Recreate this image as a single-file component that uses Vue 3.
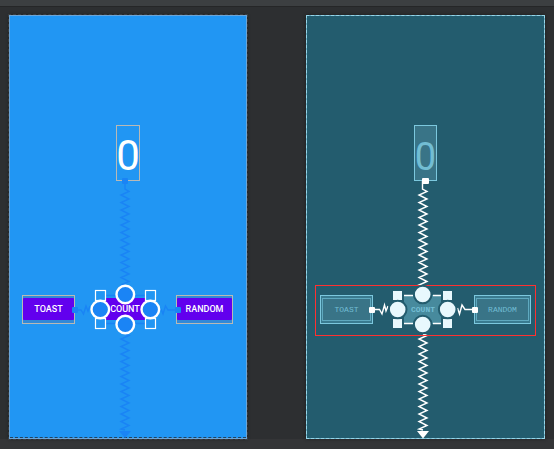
<script setup>
function spring(x, first, turns) {
  let d = ''
  for (let i = 0; i < turns; i++) {
    const y = first + i * 7.5
    d += ` L${x + 4} ${y} L${x - 4} ${y + 3.5}`
  }
  return d
}

const designTop = 'M116 166 V174' + spring(116, 176.5, 13)
const designBottom = 'M116 319' + spring(116, 320.5, 13) + ' L116 415'
const printTop = 'M116.5 166 V174' + spring(117, 176.5, 13) + ' L118 272'
const printBottom = 'M117 319' + spring(117, 320.5, 13) + ' L117 415'

const corners = [
  [0, 0],
  [50, 0],
  [0, 28],
  [50, 28],
]
const anchors = [
  [25, 0],
  [0, 15],
  [50, 15],
  [25, 30],
]
</script>

<template>
  <div class="editor">
    <header class="toolbar"></header>
    <main class="canvas">
      <section class="device design" aria-label="Design">
        <div class="stage">
          <span class="counter">0</span>
          <button class="widget toast" type="button"><span>TOAST</span></button>
          <button class="widget count" type="button"><span>COUNT</span></button>
          <button class="widget random" type="button"><span>RANDOM</span></button>
          <svg class="overlay" viewBox="0 0 239 424" aria-hidden="true">
            <g fill="none" stroke="#1a84f5" stroke-width="1.4">
              <path :d="designTop" />
              <path :d="designBottom" />
              <path d="M68 295 H72 L74.5 299 L77 291 L79 296 L81 291" />
              <path d="M168 295 H159 L156.5 291 L154 299 L152 294" />
              <path d="M97 280.5 H108 M124 280.5 H136 M97 308.5 H108 M124 308.5 H136" />
            </g>
            <g fill="#1a84f5">
              <rect x="113" y="163" width="6" height="6" rx="1" />
              <rect x="63" y="292" width="6" height="6" rx="1" />
              <rect x="166" y="292" width="6" height="6" rx="1" />
              <path d="M110 416 H122 L116 423 Z" />
            </g>
            <g fill="#2196f3" stroke="#ffffff" stroke-width="1.2">
              <rect
                v-for="(c, i) in corners"
                :key="i"
                :x="86.5 + c[0]"
                :y="275.5 + c[1]"
                width="10"
                height="10"
              />
            </g>
            <g fill="#1a84f5" stroke="#ffffff" stroke-width="2.4">
              <circle v-for="(a, i) in anchors" :key="i" :cx="91.3 + a[0]" :cy="279.5 + a[1]" r="8.8" />
            </g>
          </svg>
        </div>
      </section>

      <section class="device blueprint" aria-label="Blueprint">
        <div class="stage">
          <span class="counter">0</span>
          <button class="widget toast" type="button"><span>TOAST</span></button>
          <button class="widget count" type="button"><span>COUNT</span></button>
          <button class="widget random" type="button"><span>RANDOM</span></button>
          <svg class="overlay" viewBox="0 0 239 424" aria-hidden="true">
            <g fill="none" stroke="#ffffff" stroke-width="1.4">
              <path :d="printTop" />
              <path :d="printBottom" />
              <path d="M68 294.5 H73.5 L76 299 L78.5 290 L80 296 L82 291" />
              <path d="M168 294.5 H159 L156 290 L153.5 299 L151.5 293" />
              <path d="M97 280.5 H107 M127 280.5 H137 M97 308.5 H107 M127 308.5 H137" />
            </g>
            <g fill="#ffffff">
              <rect x="116" y="163" width="7" height="6" rx="1" />
              <rect x="63" y="292" width="6" height="6" rx="1" />
              <rect x="166" y="292" width="6" height="6" rx="1" />
              <path d="M111 416 H123 L117 423.5 Z" />
            </g>
            <rect x="9.5" y="270.5" width="220" height="50" fill="none" stroke="#ff3030" />
            <g fill="#e8f8fd" stroke="#235c6e" stroke-width="2">
              <rect
                v-for="(c, i) in corners"
                :key="i"
                :x="86 + c[0]"
                :y="275 + c[1]"
                width="11"
                height="11"
              />
              <circle v-for="(a, i) in anchors" :key="i" :cx="91.7 + a[0]" :cy="279.5 + a[1]" r="8.8" />
            </g>
          </svg>
        </div>
      </section>
    </main>
    <footer class="statusbar"></footer>
  </div>
</template>

<style>
body {
  margin: 0;
  background: #2d2f31;
}
</style>

<style scoped>
.editor {
  display: flex;
  flex-direction: column;
  min-height: 100vh;
  background: #2d2f31;
  font-family: Roboto, sans-serif;
}
.toolbar {
  height: 6px;
  background: #3c3f41;
  border-bottom: 1px solid #252627;
}
.canvas {
  flex: 1;
  display: flex;
  gap: 58px;
  padding: 8px 9px 0;
}
.statusbar {
  height: 10px;
  background: #343537;
}
.device {
  position: relative;
  flex: 1;
  display: flex;
  justify-content: center;
  box-shadow: 0 0 3px #1b1c1d;
}
.device::after {
  content: '';
  position: absolute;
  inset: 0;
  pointer-events: none;
}
.design {
  margin-right: 1px;
  background: #2196f3;
}
.design::after {
  border: 1px solid #6ba5d8;
  outline: 1px dashed #3a3e42;
}
.design::before {
  content: '';
  position: absolute;
  left: 1px;
  right: 1px;
  bottom: 1px;
  border-bottom: 1px dashed #24425c;
}
.blueprint {
  background: #235c6e;
}
.blueprint::before {
  content: '';
  position: absolute;
  inset: 0;
  border: 1px solid #6bb2c8;
}
.blueprint::after {
  border: 1px dashed #97d5e8;
}
.stage {
  position: relative;
  width: 238px;
  min-height: 424px;
}
.blueprint .stage {
  width: 239px;
}
.overlay {
  position: absolute;
  left: 0;
  top: 0;
  width: 239px;
  height: 424px;
  pointer-events: none;
}
.counter {
  position: absolute;
  box-sizing: border-box;
  left: 107px;
  top: 110px;
  width: 24px;
  height: 56px;
  border: 1px solid #b9b9b5;
  display: flex;
  justify-content: center;
  font-size: 42px;
  line-height: 60px;
  color: #ffffff;
}
.blueprint .counter {
  left: 108px;
  width: 23px;
  border: 1px solid #7cc8de;
  background: #397487;
  font-size: 38px;
  line-height: 62px;
  color: #72bdd3;
}
.widget {
  position: absolute;
  top: 280px;
  box-sizing: border-box;
  height: 29px;
  margin: 0;
  display: flex;
  padding: 2px 0 3px;
  border: 1px solid #b9b9b5;
  background: #3189d8;
  font-family: Roboto, sans-serif;
  font-size: 9px;
  font-weight: 500;
  line-height: 22px;
  color: #ffffff;
}
.widget span {
  flex: 1;
  background: #6200ee;
  border-radius: 1px;
  text-align: center;
}
.toast {
  left: 13px;
  width: 53px;
}
.count {
  left: 91px;
  width: 50px;
}
.random {
  left: 167px;
  width: 57px;
}
.design .count {
  border-color: transparent;
  background: transparent;
}
.blueprint .widget {
  padding: 2px 1px;
  border: 1px solid #7cc8de;
  background: #397b90;
  font-family: 'Liberation Mono', monospace;
  font-size: 8px;
  font-weight: 400;
  color: #72bdd3;
}
.blueprint .widget span {
  box-sizing: border-box;
  border: 1px solid #5fa9bf;
  border-radius: 0;
  background: #397487;
}
.blueprint .toast {
  left: 14px;
}
.blueprint .count {
  left: 92px;
  border-color: #5fa9bf;
  background: #478a9d;
  font-weight: 700;
}
.blueprint .count span {
  border-color: transparent;
  background: #478a9d;
}
.blueprint .random {
  left: 168px;
}
</style>
